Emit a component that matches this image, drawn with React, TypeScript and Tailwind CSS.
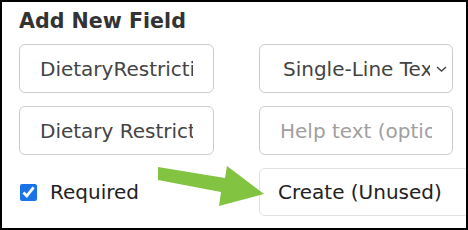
import React from 'react'

// Small chevron used by the custom select
const Chevron = () => (
  <svg width="11" height="6" viewBox="0 0 11 6" className="pointer-events-none absolute right-[6px] top-[22px]">
    <path d="M1 1 L5.5 5 L10 1" fill="none" stroke="#444" strokeWidth="1.4" />
  </svg>
)

// Green callout arrow laid over the form
const Arrow = () => (
  <svg width="468" height="230" className="pointer-events-none absolute left-0 top-0">
    <polygon
      points="156,165 223,176 225,164 262,192 217,204 219,190 156,178"
      fill="#82c341"
    />
  </svg>
)

export default function App() {
  return (
    <div
      className="relative h-[230px] w-[468px] overflow-hidden border-2 border-black bg-white"
      style={{ fontFamily: '"DejaVu Sans", Verdana, sans-serif' }}
    >
      <div className="pl-[17px] pt-[7px]">
        <h2 className="text-[20.6px] font-bold leading-[24px] text-[#333]">Add New Field</h2>
        <div className="mt-[11px] grid grid-cols-[195px_194px] gap-x-[45px] gap-y-[13px]">
          <input
            type="text"
            defaultValue="DietaryRestrictions"
            className="h-[49px] w-full rounded-[6px] border border-[#cccccc] px-[20px] text-[20px] text-[#444] outline-none"
          />
          <div className="relative">
            <select
              defaultValue="single"
              className="h-[49px] w-full appearance-none rounded-[6px] border border-[#cccccc] bg-white pl-[23px] pr-[22px] text-[20px] text-[#444] outline-none"
            >
              <option value="single">Single-Line Text</option>
              <option value="multi">Multi-Line Text</option>
            </select>
            <Chevron />
          </div>
          <input
            type="text"
            defaultValue="Dietary Restrictions"
            className="h-[49px] w-full rounded-[6px] border border-[#cccccc] px-[20px] text-[20px] text-[#444] outline-none"
          />
          <input
            type="text"
            placeholder="Help text (optional)"
            className="h-[49px] w-full rounded-[6px] border border-[#cccccc] px-[20px] text-[20px] text-[#444] outline-none placeholder:text-[#a0a0a0]"
          />
          <label className="flex items-center gap-[13px] text-[20px] text-[#222]">
            <input type="checkbox" defaultChecked className="ml-[1px] h-[17px] w-[17px] accent-[#1a73e8]" />
            Required
          </label>
          <button className="h-[48px] w-[215px] rounded-[6px] border border-[#e2e2e2] bg-white pl-[18px] text-left text-[20px] text-[#222]">
            Create (Unused)
          </button>
        </div>
      </div>
      <Arrow />
    </div>
  )
}
